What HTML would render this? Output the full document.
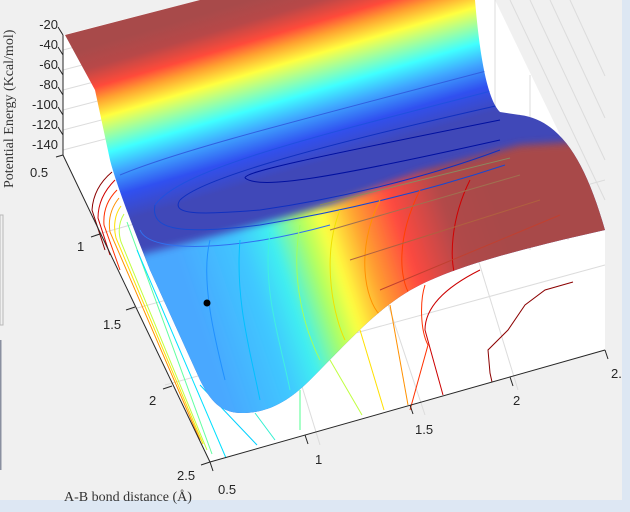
<!DOCTYPE html>
<html><head><meta charset="utf-8"><style>
html,body{margin:0;padding:0;background:#f0f0f0;}
svg{display:block;}
text{font-family:"Liberation Sans",sans-serif;font-size:13px;fill:#262626;}
.s{font-family:"Liberation Serif",serif;font-size:14px;fill:#333;}
</style></head><body>
<svg width="630" height="512" viewBox="0 0 630 512" xmlns="http://www.w3.org/2000/svg">
<defs>
<linearGradient id="gu" gradientUnits="userSpaceOnUse" x1="285" y1="-10" x2="347" y2="201">
<stop offset="0" stop-color="#a84a4a"/>
<stop offset="0.09" stop-color="#b84848"/>
<stop offset="0.18" stop-color="#ff4a3a"/>
<stop offset="0.24" stop-color="#ffa030"/>
<stop offset="0.32" stop-color="#ffff40"/>
<stop offset="0.48" stop-color="#40ffff"/>
<stop offset="0.57" stop-color="#40a8ff"/>
<stop offset="0.68" stop-color="#3050f0"/>
<stop offset="0.8" stop-color="#4048b8"/>
<stop offset="1" stop-color="#4048b8"/>
</linearGradient>
<linearGradient id="gl" gradientUnits="userSpaceOnUse" x1="200" y1="320" x2="500" y2="220">
<stop offset="0" stop-color="#48a8ff"/>
<stop offset="0.2" stop-color="#40c8ff"/>
<stop offset="0.3" stop-color="#40f0f0"/>
<stop offset="0.4" stop-color="#b0ff60"/>
<stop offset="0.47" stop-color="#ffff40"/>
<stop offset="0.57" stop-color="#ffa030"/>
<stop offset="0.69" stop-color="#ff4a40"/>
<stop offset="0.85" stop-color="#b04a4a"/>
<stop offset="1" stop-color="#a84a4a"/>
</linearGradient>
<clipPath id="cs"><path d="M65,35 L200,0 L475,0 C480,60 488,100 500,112 L520,115 C560,120 585,160 605,230 L570,238 C520,250 460,265 420,285 C380,305 350,340 310,380 C290,400 270,412 245,413 C220,414 210,400 200,380 L150,270 C130,220 115,180 110,160 L95,90 Z"/></clipPath>
<filter id="bl" x="-20%" y="-20%" width="140%" height="140%"><feGaussianBlur stdDeviation="4"/></filter>
</defs>
<rect width="630" height="512" fill="#f0f0f0"/>
<rect x="0" y="500" width="630" height="12" fill="#dde7f3"/>
<rect x="622" y="0" width="8" height="512" fill="#dde7f3"/>
<rect x="0" y="215" width="3" height="110" fill="none" stroke="#b8b8b8"/>
<rect x="0" y="340" width="1.5" height="130" fill="#8a90a0"/>
<path d="M63,35 L200,0 L495,0 L605,228 L605,350 L210,462 L63,155 Z" fill="#fff"/>
<g stroke="#dcdcdc" stroke-width="1" fill="none">
<line x1="63" y1="50" x2="140" y2="30"/><line x1="63" y1="70" x2="140" y2="50"/>
<line x1="63" y1="90" x2="140" y2="70"/><line x1="63" y1="110" x2="140" y2="90"/>
<line x1="63" y1="130" x2="140" y2="110"/><line x1="63" y1="150" x2="140" y2="130"/>
<line x1="95" y1="235" x2="520" y2="115"/><line x1="130" y1="310" x2="605" y2="180"/>
<line x1="165" y1="385" x2="605" y2="265"/>
<line x1="320" y1="445" x2="260" y2="250"/><line x1="425" y1="415" x2="360" y2="220"/>
<line x1="518" y1="390" x2="460" y2="200"/>
<line x1="510" y1="0" x2="605" y2="200"/><line x1="530" y1="0" x2="605" y2="160"/>
<line x1="550" y1="0" x2="605" y2="118"/><line x1="570" y1="0" x2="605" y2="76"/>
<line x1="495" y1="0" x2="495" y2="110"/><line x1="530" y1="75" x2="530" y2="250"/>
<line x1="568" y1="160" x2="568" y2="240"/>
</g>
<g fill="none" stroke-width="1">
<path d="M112,172 C100,182 93,195 92,210 L105,250" stroke="#8b0000"/>
<path d="M115,180 C103,192 98,205 98,218 L110,255" stroke="#d00000"/>
<path d="M117,190 C107,200 103,212 104,225 L120,270" stroke="#ff3000"/>
<path d="M119,198 C111,208 108,220 110,232 L200,440" stroke="#ff9000"/>
<path d="M121,206 C115,214 113,226 116,238 L203,444" stroke="#ffe000"/>
<path d="M124,214 C119,222 118,232 121,242 L207,450" stroke="#c0ff40"/>
<path d="M127,222 L212,454" stroke="#60ffa0"/>
<path d="M137,250 L226,458" stroke="#00e0ff"/>
<path d="M200,385 L257,445" stroke="#00d0ff"/>
<path d="M255,413 L275,440" stroke="#30f0d0"/>
<path d="M300,390 L300,430" stroke="#50ff90"/>
<path d="M330,360 L362,415" stroke="#c0ff40"/>
<path d="M360,330 L384,410" stroke="#ffe000"/>
<path d="M390,305 L408,405" stroke="#ff9000"/>
<path d="M425,285 C420,300 420,330 428,345 L410,410" stroke="#ff3000"/>
<path d="M480,270 C460,280 425,300 425,330 L443,395" stroke="#cc0000"/>
<path d="M573,282 L545,290 L525,305 L508,330 L488,350 L490,373 L492,382" stroke="#8b0000"/>
</g>
<g clip-path="url(#cs)">
<rect x="0" y="0" width="630" height="420" fill="url(#gu)"/>
<path d="M60,290 L140,255 L230,232 L330,205 L420,172 L520,145 L640,138 L640,440 L60,440 Z" fill="url(#gl)" filter="url(#bl)"/>
<g fill="none" stroke-width="1">
<path d="M245,178 C245,172 300,160 500,120" stroke="#0010a0"/>
<path d="M245,178 C260,190 330,178 500,140" stroke="#0010a0"/>
<path d="M180,200 C170,215 200,215 260,210 C330,200 420,180 500,150" stroke="#1030c0"/>
<path d="M180,200 C200,180 300,150 500,105" stroke="#1030c0"/>
<path d="M155,205 C150,230 180,235 260,225 C350,210 430,190 505,165" stroke="#1848d0"/>
<path d="M155,205 C180,170 300,140 495,90" stroke="#2050e0"/>
<path d="M140,230 C150,255 240,250 330,225" stroke="#3070f0"/>
<path d="M120,175 C180,150 300,120 490,70" stroke="#3060e0"/>
<path d="M210,240 C200,280 215,340 225,380" stroke="#2090ff"/>
<path d="M240,240 C235,300 250,350 260,400" stroke="#00c0ff"/>
<path d="M270,232 C262,290 280,340 290,390" stroke="#40f0e0"/>
<path d="M300,225 C290,280 305,330 320,360" stroke="#a0ff60"/>
<path d="M340,210 C320,260 335,320 345,340" stroke="#f0e000"/>
<path d="M380,200 C355,250 365,300 380,315" stroke="#ff9000"/>
<path d="M420,190 C395,240 400,280 410,295" stroke="#ff4000"/>
<path d="M470,180 C450,220 450,260 455,275" stroke="#d00000"/>
<path d="M320,205 L510,158" stroke="#8a8a60"/><path d="M330,230 L520,175" stroke="#a07050"/>
<path d="M350,260 L540,200" stroke="#b06040"/><path d="M380,290 L560,215" stroke="#c04030"/>
</g>
</g>
<g stroke="#262626" stroke-width="1" fill="none">
<line x1="63" y1="35" x2="63" y2="155"/>
<line x1="63" y1="155" x2="210" y2="462"/>
<line x1="210" y1="462" x2="605" y2="350"/>
<path d="M63,35 l-5,-8 M63,55 l-5,-8 M63,75 l-5,-8 M63,95 l-5,-8 M63,115 l-5,-8 M63,135 l-5,-8 M63,155 l-7,2"/>
<path d="M100,234 l-9,3 M135,307 l-9,3 M172,386 l-9,3 M210,462 l-9,3"/>
<path d="M210,462 l3,9 M305,435 l3,9 M410,405 l3,9 M510,377 l3,9 M605,350 l3,9"/>
</g>
<circle cx="207" cy="303" r="3.5" fill="#000"/>
<g text-anchor="end">
<text x="58" y="29">-20</text><text x="58" y="49">-40</text><text x="58" y="69">-60</text>
<text x="58" y="89">-80</text><text x="58" y="109">-100</text><text x="58" y="129">-120</text>
<text x="58" y="149">-140</text>
</g>
<text x="30" y="177">0.5</text>
<text x="77" y="251">1</text>
<text x="103" y="329">1.5</text>
<text x="149" y="405">2</text>
<text x="177" y="480">2.5</text>
<text x="218" y="494">0.5</text>
<text x="315" y="464">1</text>
<text x="415" y="434">1.5</text>
<text x="513" y="405">2</text>
<text x="611" y="378">2.</text>
<text class="s" transform="translate(13,188) rotate(-90)">Potential Energy (Kcal/mol)</text>
<text class="s" x="64" y="501">A-B bond distance (Å)</text>
</svg>
</body></html>
